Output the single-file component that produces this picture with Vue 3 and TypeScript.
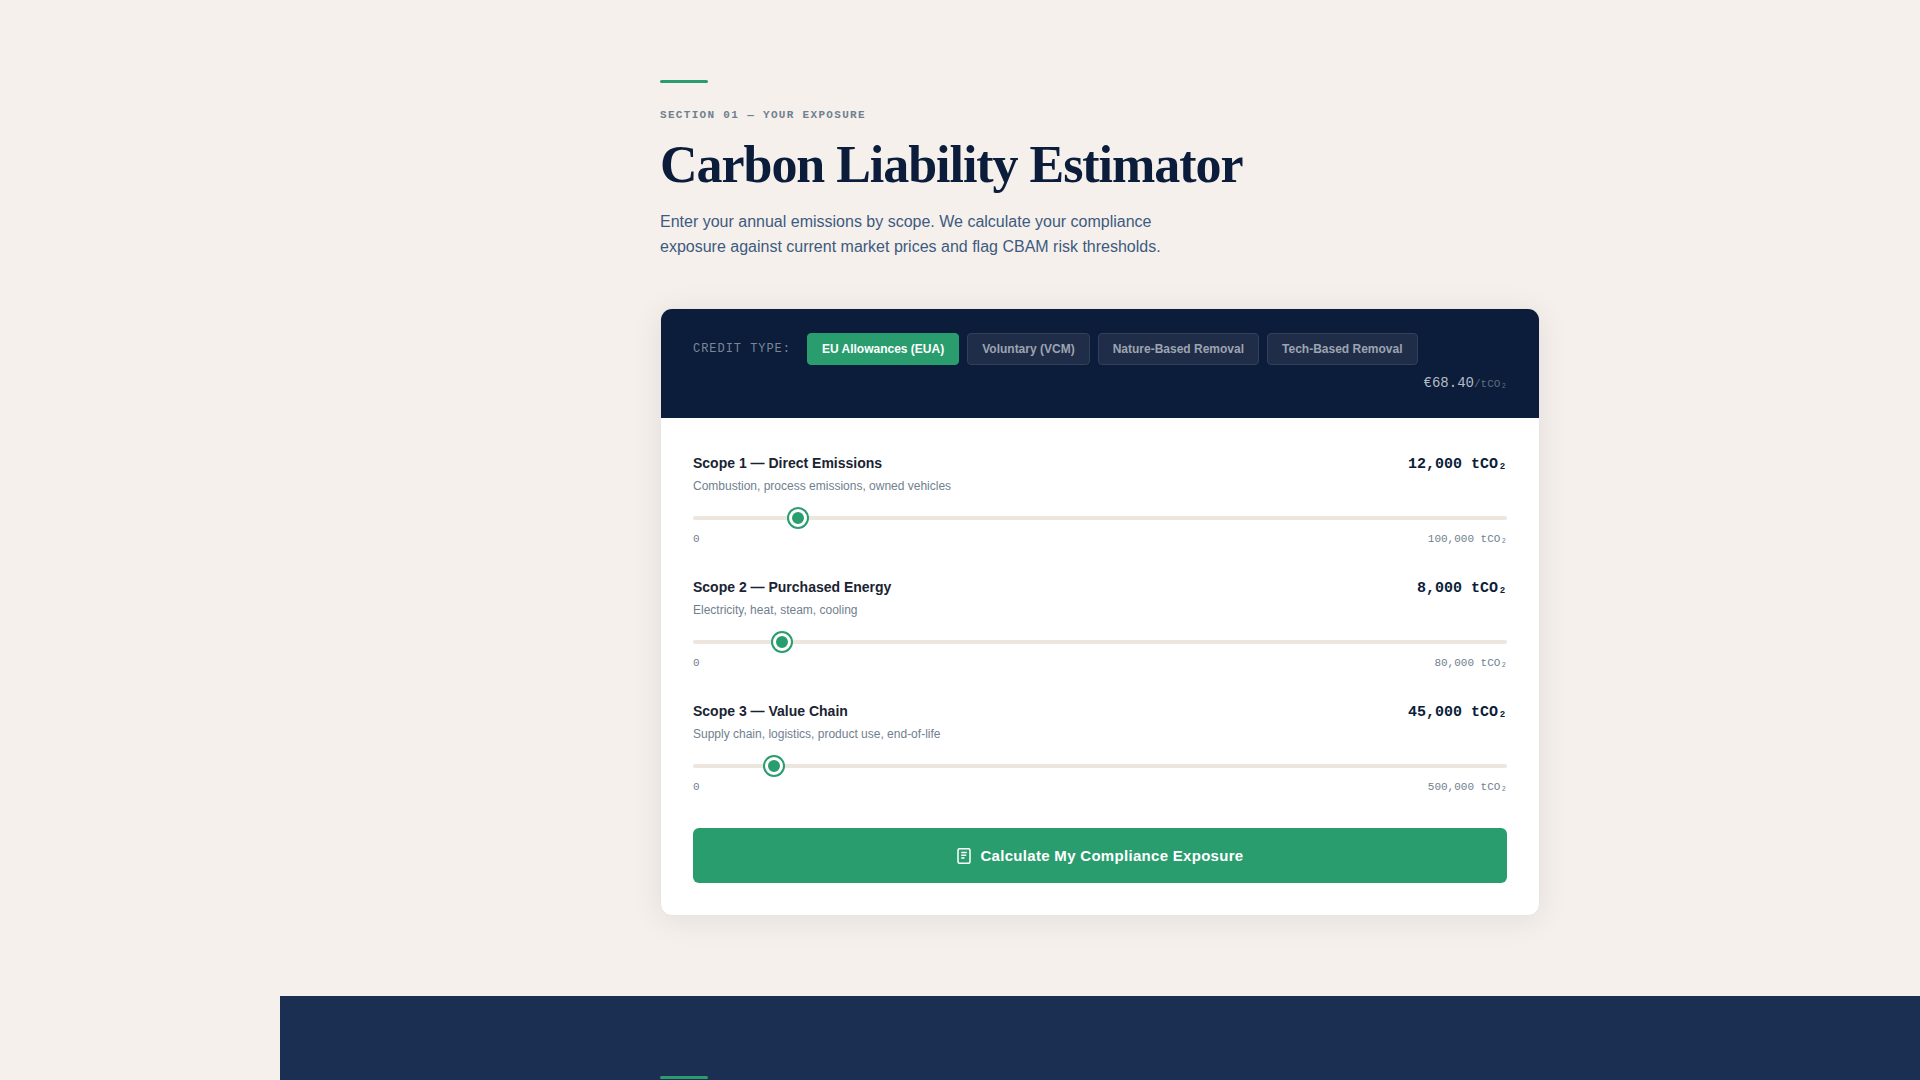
<script setup lang="ts">
import { computed, ref } from 'vue'

interface CreditType {
  id: string
  label: string
  price: number
}

interface Scope {
  id: string
  title: string
  hint: string
  max: number
  value: number
}

const creditTypes: CreditType[] = [
  { id: 'eua', label: 'EU Allowances (EUA)', price: 68.4 },
  { id: 'vcm', label: 'Voluntary (VCM)', price: 14.2 },
  { id: 'nature', label: 'Nature-Based Removal', price: 24.8 },
  { id: 'tech', label: 'Tech-Based Removal', price: 185 },
]

const selected = ref('eua')

const scopes = ref<Scope[]>([
  {
    id: 'scope1',
    title: 'Scope 1 — Direct Emissions',
    hint: 'Combustion, process emissions, owned vehicles',
    max: 100000,
    value: 12000,
  },
  {
    id: 'scope2',
    title: 'Scope 2 — Purchased Energy',
    hint: 'Electricity, heat, steam, cooling',
    max: 80000,
    value: 8000,
  },
  {
    id: 'scope3',
    title: 'Scope 3 — Value Chain',
    hint: 'Supply chain, logistics, product use, end-of-life',
    max: 500000,
    value: 45000,
  },
])

const price = computed(() => {
  const type = creditTypes.find((t) => t.id === selected.value)
  return '€' + (type ? type.price : 0).toFixed(2)
})

const tonnes = (n: number): string => n.toLocaleString('en-US') + ' tCO₂'
</script>

<template>
  <main class="page">
    <section class="section">
      <div class="inner">
        <div class="rule"></div>
        <p class="eyebrow">SECTION 01 — YOUR EXPOSURE</p>
        <h1 class="title">Carbon Liability Estimator</h1>
        <p class="lead">
          Enter your annual emissions by scope. We calculate your compliance exposure against
          current market prices and flag CBAM risk thresholds.
        </p>

        <div class="card">
          <div class="card-head">
            <span class="credit-label">CREDIT TYPE:</span>
            <div class="credit-types">
              <button
                v-for="type in creditTypes"
                :key="type.id"
                type="button"
                class="chip"
                :class="{ active: type.id === selected }"
                @click="selected = type.id"
              >
                {{ type.label }}
              </button>
            </div>
            <div class="price">{{ price }}<span class="unit">/tCO₂</span></div>
          </div>

          <div class="card-body">
            <div class="scopes">
              <div v-for="scope in scopes" :key="scope.id">
                <div class="scope-head">
                  <label class="scope-title" :for="scope.id">{{ scope.title }}</label>
                  <output class="scope-value" :for="scope.id">{{ tonnes(scope.value) }}</output>
                </div>
                <p class="hint">{{ scope.hint }}</p>
                <input
                  :id="scope.id"
                  v-model.number="scope.value"
                  class="slider"
                  type="range"
                  min="0"
                  :max="scope.max"
                  step="500"
                />
                <div class="bounds">
                  <span>0</span>
                  <span>{{ tonnes(scope.max) }}</span>
                </div>
              </div>
            </div>

            <button type="button" class="submit">
              <svg width="16" height="16" viewBox="0 0 16 16" fill="none" aria-hidden="true">
                <rect x="2" y="0.75" width="12" height="14.5" rx="1.5" stroke="currentColor" stroke-width="1.5" />
                <path d="M5.25 4.5h5.5M5.25 7.25h5M5.25 10h3.25" stroke="currentColor" stroke-width="1.5" />
              </svg>
              Calculate My Compliance Exposure
            </button>
          </div>
        </div>
      </div>
    </section>

    <section class="section dark">
      <div class="inner">
        <div class="rule"></div>
      </div>
    </section>
  </main>
</template>

<style>
body {
  margin: 0;
  background: #f5f0eb;
}
</style>

<style scoped>
.page {
  display: flex;
  flex-direction: column;
  min-height: 100vh;
  margin-left: 280px;
  box-sizing: border-box;
  font-family: 'Liberation Sans', Arial, sans-serif;
  color: #0b1d3a;
}

.section {
  padding: 80px 48px;
}

.section.dark {
  flex: 1;
  padding-bottom: 0;
  background: #1b2f52;
}

.inner {
  max-width: 880px;
  margin: 0 auto;
}

.rule {
  width: 48px;
  height: 3px;
  border-radius: 2px;
  background: #2a9d6f;
}

.eyebrow {
  margin: 24px 0 12px;
  font: bold 11px/16px 'Liberation Mono', monospace;
  letter-spacing: 0.12em;
  color: #708090;
}

.title {
  margin: 0 0 14px;
  font: bold 52px/60px 'Liberation Serif', serif;
  letter-spacing: -0.02em;
}

.lead {
  max-width: 520px;
  margin: 0 0 49px;
  font-size: 16px;
  line-height: 25px;
  color: #3d5a80;
}

.card {
  overflow: hidden;
  border: 1px solid #ebe5df;
  border-radius: 12px;
  background: #fff;
  box-shadow: 0 4px 32px rgba(11, 29, 58, 0.08);
}

.card-head {
  display: flex;
  flex-wrap: wrap;
  align-items: center;
  gap: 8px 16px;
  padding: 24px 32px;
  background: #0b1d3a;
}

.credit-label {
  font: 12px/20px 'Liberation Mono', monospace;
  letter-spacing: 0.08em;
  color: #7a8698;
}

.credit-types {
  display: flex;
  flex-wrap: wrap;
  gap: 8px;
}

.chip {
  padding: 8px 14px;
  border: 1px solid #343f59;
  border-radius: 4px;
  background: #1f2d48;
  font: bold 12px/14px 'Liberation Sans', Arial, sans-serif;
  color: #9da4b0;
  cursor: pointer;
}

.chip.active {
  border-color: #2a9d6f;
  background: #2a9d6f;
  color: #fff;
}

.price {
  margin-left: auto;
  font: 14px/21px 'Liberation Mono', monospace;
  color: #b6bbc4;
}

.unit {
  font-size: 11px;
  line-height: 14px;
  color: #606b80;
}

.card-body {
  padding: 33px 32px 32px;
}

.scopes {
  display: flex;
  flex-direction: column;
  gap: 27px;
}

.scope-head {
  display: flex;
  align-items: baseline;
  justify-content: space-between;
}

.scope-title {
  font-size: 14px;
  font-weight: bold;
  line-height: 24px;
  color: #1a2332;
}

.scope-value {
  font: bold 15px/24px 'Liberation Mono', monospace;
}

.hint {
  margin: 0 0 21px;
  font-size: 12px;
  line-height: 18px;
  color: #708090;
}

.slider {
  display: block;
  width: 100%;
  height: 4px;
  margin: 0;
  border-radius: 2px;
  background: #ede6df;
  appearance: none;
  cursor: pointer;
}

.slider::-webkit-slider-thumb {
  width: 18px;
  height: 18px;
  border: 3px solid #fff;
  border-radius: 50%;
  background: #2a9d6f;
  box-shadow: 0 0 0 2px #2a9d6f;
  box-sizing: border-box;
  appearance: none;
}

.bounds {
  display: flex;
  justify-content: space-between;
  margin-top: 10px;
  font: 11px/18px 'Liberation Mono', monospace;
  color: #708090;
}

.submit {
  display: flex;
  align-items: center;
  justify-content: center;
  gap: 8px;
  width: 100%;
  margin-top: 32px;
  padding: 18px 32px;
  border: 0;
  border-radius: 6px;
  background: #2a9d6f;
  font: bold 15px/19px 'Liberation Sans', Arial, sans-serif;
  letter-spacing: 0.02em;
  color: #fff;
  cursor: pointer;
}
</style>
